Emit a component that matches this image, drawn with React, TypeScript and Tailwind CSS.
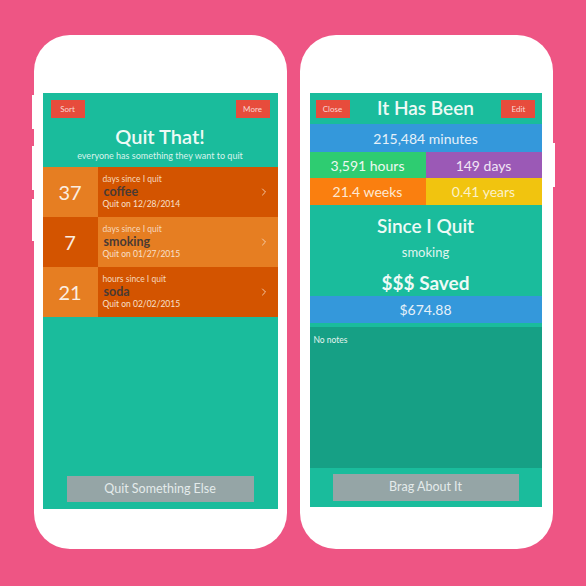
import { ChevronRight } from "lucide-react"

const quits = [
  { n: "37", unit: "days since I quit", name: "coffee", date: "Quit on 12/28/2014", alt: false },
  { n: "7", unit: "days since I quit", name: "smoking", date: "Quit on 01/27/2015", alt: true },
  { n: "21", unit: "hours since I quit", name: "soda", date: "Quit on 02/02/2015", alt: false },
]

const Phone = ({ children, side }: { children: React.ReactNode; side: "left" | "right" }) => (
  <div className="relative w-[253px] h-[514px] bg-white rounded-[36px] pt-[58px]">
    {/* side buttons */}
    {side === "left" ? (
      <>
        <div className="absolute left-[-2px] top-[60px] w-[2px] h-[34px] bg-white" />
        <div className="absolute left-[-2px] top-[111px] w-[2px] h-[44px] bg-white" />
        <div className="absolute left-[-2px] top-[164px] w-[2px] h-[42px] bg-white" />
      </>
    ) : (
      <div className="absolute right-[-2px] top-[108px] w-[2px] h-[44px] bg-white" />
    )}
    {children}
  </div>
)

const RedButton = ({ label }: { label: string }) => (
  <div className="w-[34px] h-[18px] bg-[#e74c3c] flex items-center justify-center text-[8px] text-[#f7d9d5]">
    {label}
  </div>
)

const ListScreen = () => (
  <div className="ml-[9px] w-[235px] h-[416px] bg-[#1abc9c] flex flex-col">
    {/* Header */}
    <div className="h-[74px] pt-[7px] px-[8px]">
      <div className="flex justify-between">
        <RedButton label="Sort" />
        <RedButton label="More" />
      </div>
      <h1 className="text-center text-[20px] leading-[24px] font-semibold text-[#eefaf6] mt-[6px]">Quit That!</h1>
      <p className="text-center text-[9px] leading-[12px] text-[#d9f3ec] mt-[2px]">everyone has something they want to quit</p>
    </div>

    {/* Quits */}
    {quits.map((q) => (
      <div key={q.name} className="flex h-[50px]">
        <div
          className={`w-[55px] flex items-center justify-center text-[20px] text-[#fbeee0] ${
            q.alt ? "bg-[#d35400]" : "bg-[#e67e22]"
          }`}
        >
          {q.n}
        </div>
        <div className={`flex-1 flex items-center pl-[5px] pr-[8px] ${q.alt ? "bg-[#e67e22]" : "bg-[#d35400]"}`}>
          <div className="flex-1 flex flex-col">
            <span className="text-[8.5px] leading-[11px] text-[#f6d7bd]">{q.unit}</span>
            <span className="text-[12.5px] leading-[13px] font-bold text-[#4a3a33] pl-[1px]">{q.name}</span>
            <span className="text-[8.5px] leading-[12px] text-[#f8e0cc]">{q.date}</span>
          </div>
          <ChevronRight className="w-[12px] h-[12px] text-[#f6d7bd]" strokeWidth={1.75} />
        </div>
      </div>
    ))}

    <div className="flex-1 flex items-end justify-center pb-[7px]">
      <div className="w-[187px] h-[26px] bg-[#95a5a6] flex items-center justify-center text-[12.5px] text-[#e4ebeb]">
        Quit Something Else
      </div>
    </div>
  </div>
)

const DetailScreen = () => (
  <div className="ml-[10px] w-[232px] h-[414px] bg-[#1abc9c] flex flex-col">
    {/* Header */}
    <div className="h-[31px] px-[6px] flex items-center justify-between">
      <RedButton label="Close" />
      <span className="text-[19px] font-semibold text-[#eefaf6]">It Has Been</span>
      <RedButton label="Edit" />
    </div>

    <div className="h-[28px] bg-[#3498db] flex items-center justify-center text-[14px] text-[#e6f1f9]">
      215,484 minutes
    </div>
    <div className="grid grid-cols-2 text-[14px] text-[#eef8f1]">
      <div className="h-[26px] bg-[#2ecc71] flex items-center justify-center">3,591 hours</div>
      <div className="h-[26px] bg-[#9b59b6] flex items-center justify-center text-[#f1e6f5]">149 days</div>
      <div className="h-[27px] bg-[#fa7f0f] flex items-center justify-center text-[#fde9d4]">21.4 weeks</div>
      <div className="h-[27px] bg-[#f1c40f] flex items-center justify-center text-[#fbf1c9]">0.41 years</div>
    </div>

    <div className="h-[91px] flex flex-col items-center text-[#eefaf6]">
      <span className="text-[19px] leading-[24px] font-semibold mt-[9px]">Since I Quit</span>
      <span className="text-[13px] leading-[16px] mt-[6px] text-[#e0f5ef]">smoking</span>
      <span className="text-[19px] leading-[24px] font-bold mt-[11px]">$$$ Saved</span>
    </div>

    <div className="h-[27px] bg-[#3498db] flex items-center justify-center text-[14px] text-[#e6f1f9]">
      $674.88
    </div>

    <div className="mt-[4px] h-[141px] bg-[#16a085] px-[4px] pt-[7px] text-[8.5px] text-[#e4f4ef]">No notes</div>

    <div className="flex-1 flex items-center justify-center">
      <div className="w-[186px] h-[27px] bg-[#95a5a6] flex items-center justify-center text-[12.5px] text-[#e4ebeb]">
        Brag About It
      </div>
    </div>
  </div>
)

const App = () => {
  return (
    <div
      className="w-[586px] h-[586px] bg-[#ee5584] flex justify-center gap-[13px] pt-[35px]"
      style={{ fontFamily: "Lato, 'Open Sans', sans-serif" }}
    >
      <Phone side="left">
        <ListScreen />
      </Phone>
      <Phone side="right">
        <DetailScreen />
      </Phone>
    </div>
  )
}

export default App
